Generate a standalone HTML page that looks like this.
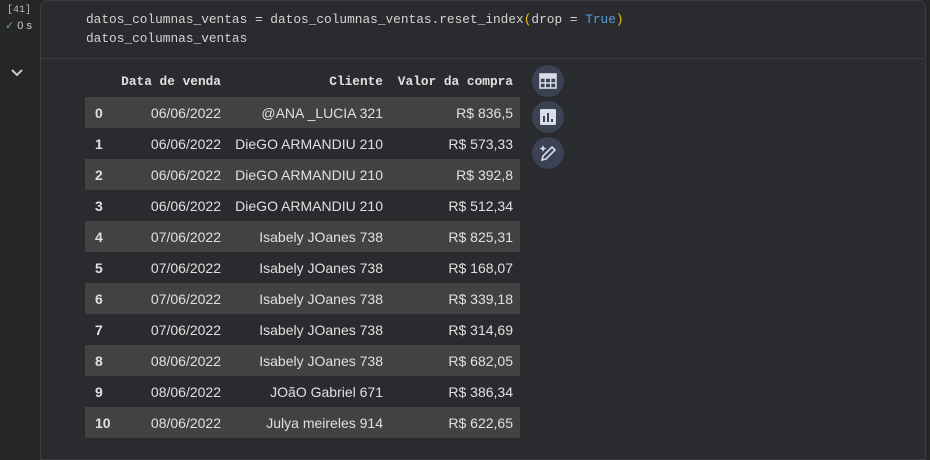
<!DOCTYPE html>
<html><head><style>
body{margin:0;width:930px;height:445px;background:#262626;overflow:hidden;font-family:"Liberation Sans",sans-serif;position:relative}
.cell{position:absolute;left:40px;top:0;width:886px;height:460px;background:#2a2b2e;border:1px solid #3c3d40;border-radius:8px 8px 0 0;box-sizing:border-box}
.code{position:absolute;left:86px;top:10px;font-family:"Liberation Mono",monospace;font-size:12.8px;line-height:19px;color:#d4d4d4;white-space:pre}
.sep{position:absolute;left:41px;right:6px;top:58px;height:1px;background:#3c3d40}
table{position:absolute;left:85px;top:66px;border-collapse:collapse;color:#e0e0e0;font-size:14px;table-layout:fixed;width:435px}
th{font-family:"Liberation Mono",monospace;font-size:12.8px;font-weight:bold;height:31px;text-align:right;padding:0 7px 0 0;white-space:nowrap}
td{height:31px;text-align:right;padding:0 7px 0 0;box-sizing:border-box;white-space:nowrap}
td.i{text-align:left;padding:0 0 0 10px;font-weight:bold}
tr.e td{background:#424242}
.btn{position:absolute;left:532px;width:32px;height:32px;border-radius:50%;background:#3a4253}
</style></head><body>
<div style="position:absolute;left:7px;top:5px;font-family:'Liberation Mono',monospace;font-size:10px;color:#bbb">[41]</div>
<div style="position:absolute;left:5px;top:19px;font-size:11px;color:#ccc"><span style="color:#5cb85c">✓</span> 0 s</div>
<svg style="position:absolute;left:11px;top:69px" width="12" height="8"><path d="M1 1 L6 6 L11 1" stroke="#ccc" stroke-width="2" fill="none"/></svg>
<div class="cell"></div>
<div class="code">datos_columnas_ventas = datos_columnas_ventas.reset_index<span style="color:#e5c21b">(</span>drop = <span style="color:#569cd6">True</span><span style="color:#e5c21b">)</span>
datos_columnas_ventas</div>
<div class="sep"></div>
<table>
<colgroup><col style="width:30px"><col style="width:113px"><col style="width:162px"><col style="width:130px"></colgroup>
<tr><th></th><th>Data de venda</th><th>Cliente</th><th>Valor da compra</th></tr>
<tr class="e"><td class="i">0</td><td>06/06/2022</td><td>@ANA _LUCIA 321</td><td>R$ 836,5</td></tr>
<tr><td class="i">1</td><td>06/06/2022</td><td>DieGO ARMANDIU 210</td><td>R$ 573,33</td></tr>
<tr class="e"><td class="i">2</td><td>06/06/2022</td><td>DieGO ARMANDIU 210</td><td>R$ 392,8</td></tr>
<tr><td class="i">3</td><td>06/06/2022</td><td>DieGO ARMANDIU 210</td><td>R$ 512,34</td></tr>
<tr class="e"><td class="i">4</td><td>07/06/2022</td><td>Isabely JOanes 738</td><td>R$ 825,31</td></tr>
<tr><td class="i">5</td><td>07/06/2022</td><td>Isabely JOanes 738</td><td>R$ 168,07</td></tr>
<tr class="e"><td class="i">6</td><td>07/06/2022</td><td>Isabely JOanes 738</td><td>R$ 339,18</td></tr>
<tr><td class="i">7</td><td>07/06/2022</td><td>Isabely JOanes 738</td><td>R$ 314,69</td></tr>
<tr class="e"><td class="i">8</td><td>08/06/2022</td><td>Isabely JOanes 738</td><td>R$ 682,05</td></tr>
<tr><td class="i">9</td><td>08/06/2022</td><td>JOãO Gabriel 671</td><td>R$ 386,34</td></tr>
<tr class="e"><td class="i">10</td><td>08/06/2022</td><td>Julya meireles 914</td><td>R$ 622,65</td></tr>
</table>
<div class="btn" style="top:65px"><svg width="32" height="32"><rect x="8" y="9" width="16" height="14" fill="none" stroke="#d8dde8" stroke-width="1.6"/><path d="M8 13h16M8 18h16M13.3 13v10M18.6 13v10" stroke="#d8dde8" stroke-width="1.4"/><rect x="8" y="9" width="16" height="4" fill="#d8dde8"/></svg></div>
<div class="btn" style="top:101px"><svg width="32" height="32"><rect x="8" y="8" width="16" height="16" rx="1.5" fill="#d8dde8"/><path d="M12 21v-6M16 21v-9M20 21v-3" stroke="#3a4253" stroke-width="2"/></svg></div>
<div class="btn" style="top:137px"><svg width="32" height="32"><path d="M10 23l1-4 9-9 3 3-9 9z" fill="none" stroke="#d8dde8" stroke-width="1.6"/><path d="M11 8l1 2.5 2.5 1-2.5 1-1 2.5-1-2.5-2.5-1 2.5-1z" fill="#d8dde8"/></svg></div>
</body></html>
